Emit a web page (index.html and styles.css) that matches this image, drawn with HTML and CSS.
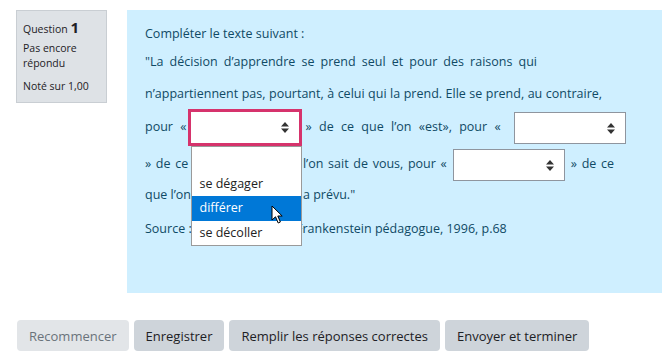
FILE: index.html
```html
<!DOCTYPE html>
<html lang="fr">
<head>
    <meta charset="UTF-8">
    <title>Question 1</title>
    <link rel="stylesheet" href="styles.css">
</head>
<body>
    <div class="que">
        <div class="info">
            <div class="qno">Question <b>1</b></div>
            <div class="state">Pas encore répondu</div>
            <div class="grade">Noté sur 1,00</div>
        </div>
        <div class="formulation">
            <div class="line l1">Compléter le texte suivant :</div>
            <div class="line l2">"La décision d’apprendre se prend seul et pour des raisons qui</div>
            <div class="line l3">n’appartiennent pas, pourtant, à celui qui la prend. Elle se prend, au contraire,</div>
            <div class="line l4">pour «<span class="select focus">
                    <svg class="arrows" width="8" height="11" viewBox="0 0 8 11"><path d="M4 0 L8 4.5 L0 4.5 Z M0 6.5 L8 6.5 L4 11 Z" fill="#333"/></svg>
                    <span class="menu">
                        <span class="opt"></span>
                        <span class="opt">se dégager</span>
                        <span class="opt active">différer</span>
                        <span class="opt">se décoller</span>
                    </span>
                    <svg class="cursor" width="13" height="20" viewBox="0 0 13 20"><path d="M1 1 L1 15 L4.5 11.8 L7.2 18 L9.4 17 L6.8 11 L11.2 11 Z" fill="#fff" stroke="#000" stroke-width="1"/></svg>
                </span>» de ce que l’on «est», pour « <span class="select last">
                    <svg class="arrows" width="8" height="11" viewBox="0 0 8 11"><path d="M4 0 L8 4.5 L0 4.5 Z M0 6.5 L8 6.5 L4 11 Z" fill="#333"/></svg>
                </span></div>
            <div class="line l5">» de ce que l’on croit que l’on sait de vous, pour «<span class="select">
                    <svg class="arrows" width="8" height="11" viewBox="0 0 8 11"><path d="M4 0 L8 4.5 L0 4.5 Z M0 6.5 L8 6.5 L4 11 Z" fill="#333"/></svg>
                </span>» de ce</div>
            <div class="line l6">que l’on fait, de ce que l’on a prévu."</div>
            <div class="line l7">Source : Philippe Meirieu, Frankenstein pédagogue, 1996, p.68</div>
        </div>
    </div>
    <div class="buttons">
        <button class="btn" disabled>Recommencer</button>
        <button class="btn">Enregistrer</button>
        <button class="btn">Remplir les réponses correctes</button>
        <button class="btn">Envoyer et terminer</button>
    </div>
</body>
</html>
```

FILE: styles.css
```css
body {
    margin: 0;
    padding: 10px 0 0 16px;
    font-family: "Open Sans", "Noto Sans", sans-serif;
    background: #fff;
    overflow: hidden;
}
.que {
    display: flex;
    gap: 20px;
    align-items: flex-start;
}
.info {
    width: 77px;
    background: #dee2e6;
    border: 1px solid #c9ced3;
    padding: 6px 6px 8px 6px;
    color: #1d2125;
    font-size: 10.5px;
}
.qno {
    height: 20px;
    line-height: 20px;
}
.qno b {
    font-size: 15px;
}
.state {
    margin-top: 4px;
    line-height: 15px;
}
.grade {
    margin-top: 8px;
    line-height: 15px;
}
.formulation {
    flex: 1;
    height: 269px;
    background: #cfefff;
    padding: 14px 0 0 18px;
    color: #104a65;
    font-size: 12.5px;
}
.line {
    text-align: justify;
    text-align-last: justify;
}
.l1 {
    height: 20px;
    line-height: 20px;
    text-align-last: left;
    margin-bottom: 2px;
}
.l2 {
    width: 392px;
    height: 32px;
    line-height: 32px;
}
.l3 {
    width: 457px;
    height: 32px;
    line-height: 32px;
}
.l4 {
    width: 481px;
    height: 34px;
    line-height: 34px;
}
.l5 {
    width: 469px;
    height: 40px;
    line-height: 40px;
}
.l6 {
    height: 22px;
    line-height: 22px;
    text-align-last: left;
}
.l7 {
    margin-top: 13px;
    height: 20px;
    line-height: 20px;
    text-align-last: left;
}
.select {
    position: relative;
    display: inline-block;
    vertical-align: middle;
    width: 110px;
    height: 30px;
    background: #fff;
    border: 1px solid #8f959e;
    margin: 0 6px;
    text-align: left;
}
.select.last {
    margin-right: 0;
}
.focus {
    width: 108px;
    height: 31px;
    border: 1px solid #d6336c;
    box-shadow: 0 0 0 2px #d6336c;
    margin: 0 5px 0 4px;
}
.arrows {
    position: absolute;
    right: 10px;
    top: 10px;
}
.menu {
    position: absolute;
    left: 0;
    top: 34px;
    width: 109px;
    background: #fff;
    border: 1px solid #9a9a9a;
    z-index: 2;
    line-height: 24.5px;
    text-align: left;
    text-align-last: left;
}
.opt {
    display: block;
    height: 24.5px;
    padding-left: 7px;
    color: #222;
    font-size: 12.5px;
}
.opt.active {
    background: #0078d7;
    color: #fff;
}
.cursor {
    position: absolute;
    left: 80px;
    top: 93px;
    z-index: 3;
}
.buttons {
    display: flex;
    gap: 5px;
    margin: 27px 0 0 1px;
}
.btn {
    height: 31px;
    padding: 0 12px;
    border: none;
    border-radius: 4px;
    background: #ced4da;
    color: #1d2125;
    font-family: "Open Sans", "Noto Sans", sans-serif;
    font-size: 13px;
}
.btn:disabled {
    background: #e2e5e8;
    color: #6a737b;
}
```
